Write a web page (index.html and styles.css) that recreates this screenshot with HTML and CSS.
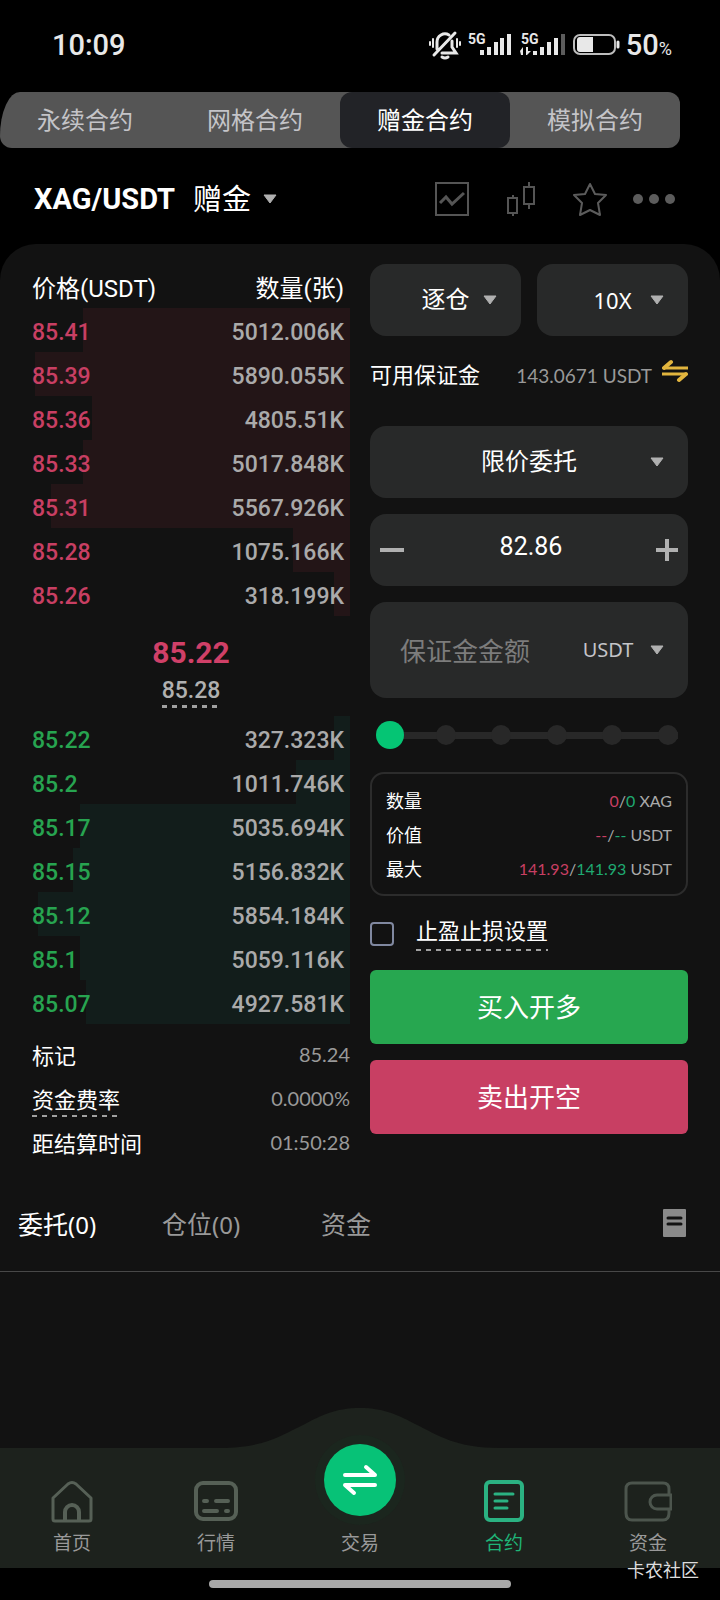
FILE: index.html
```html
<!DOCTYPE html>
<html lang="zh-CN">
<head>
    <meta charset="UTF-8">
    <meta name="viewport" content="width=device-width, initial-scale=1.0">
    <title>XAG/USDT 赠金合约</title>
    <link rel="stylesheet" href="styles.css">
</head>
<body>

    <!-- Status Bar -->
    <header class="status-bar">
        <span class="status-time">10:09</span>
        <div class="status-icons">
            <svg width="34" height="30" viewBox="0 0 34 30" fill="none" stroke="#e8e8e8" stroke-width="3" stroke-linecap="round">
                <path d="M9 19V12a8 8 0 0 1 12-7M24 11v6l4 6H14M27 3L6 25"/>
                <path d="M14 27q3 2 6 0"/>
                <path d="M2 12v3M5 9v8M29 9v8M32 12v3" stroke-width="2"/>
            </svg>
            <svg width="46" height="30" viewBox="0 0 46 30" fill="#e8e8e8">
                <text class="network" x="0" y="14">5G</text>
                <path d="M12 20h4v5h-4zM19 17h4v8h-4zM26 12h4v13h-4zM32 8h4v17h-4zM39 4h4v21h-4z"/>
            </svg>
            <svg width="46" height="30" viewBox="0 0 46 30" fill="#e8e8e8">
                <text class="network" x="1" y="14">5G</text>
                <path d="M0 21l3-4v8H1zM6 17h2v4h3l-4 4H6zM13 21h4v4h-4zM20 17h4v8h-4zM27 12h4v13h-4zM34 8h4v17h-4z"/>
                <path fill="#5c5c5c" d="M41 4h4v21h-4z"/>
            </svg>
            <svg width="48" height="30" viewBox="0 0 48 30">
                <rect x="2" y="5" width="41" height="19" rx="6" fill="none" stroke="#bdbdbd" stroke-width="2"/>
                <path d="M8 7h13v15H8q-3 0-3-3v-9q0-3 3-3z" fill="#e8e8e8"/>
                <path d="M46 12v5" stroke="#e8e8e8" stroke-width="3" stroke-linecap="round"/>
            </svg>
            <span class="battery-level">50<small>%</small></span>
        </div>
    </header>

    <!-- Contract Type Tabs -->
    <nav class="contract-tabs">
        <button type="button">永续合约</button>
        <button type="button">网格合约</button>
        <button type="button" class="active">赠金合约</button>
        <button type="button">模拟合约</button>
    </nav>

    <!-- Trading Pair -->
    <div class="pair-bar">
        <button type="button" class="pair-name">
            <strong>XAG/USDT</strong>
            <span>赠金</span>
            <svg width="14" height="10" viewBox="0 0 14 10"><path d="M1 1h12L7 9z" fill="#b0b0b0" stroke="#b0b0b0" stroke-linejoin="round"/></svg>
        </button>
        <div class="pair-tools">
            <button type="button" aria-label="K线">
                <svg width="34" height="34" viewBox="0 0 34 34" fill="none" stroke="#555" stroke-width="2">
                    <rect x="1" y="1" width="32" height="32"/>
                    <path d="M5 21l6-6 6 7 12-11" stroke-width="3"/>
                </svg>
            </button>
            <button type="button" aria-label="深度">
                <svg width="34" height="34" viewBox="0 0 34 34" fill="none" stroke="#555" stroke-width="2">
                    <path d="M4 16h9v15H4zM9 13v3M9 31v3M20 5h10v17H20zM25 0v5M25 22v5"/>
                </svg>
            </button>
            <button type="button" aria-label="收藏">
                <svg width="34" height="34" viewBox="0 0 34 34" fill="none" stroke="#5c5c5c" stroke-width="2" stroke-linejoin="round">
                    <path d="M17 2l5 10 11 1-8 8 2 12-10-5-10 5 2-12-8-8 11-1z"/>
                </svg>
            </button>
            <button type="button" aria-label="更多">
                <svg width="42" height="34" viewBox="0 0 42 34" fill="#5c5c5c">
                    <circle cx="5" cy="17" r="5"/><circle cx="21" cy="17" r="5"/><circle cx="37" cy="17" r="5"/>
                </svg>
            </button>
        </div>
    </div>

    <main class="panel">
        <div class="trade">

            <!-- Order Book -->
            <section class="book">
                <table>
                    <thead>
                        <tr><th>价格(USDT)</th><th>数量(张)</th></tr>
                    </thead>
                    <tbody class="asks">
                        <tr style="--depth: 84%"><td>85.41</td><td>5012.006K</td></tr>
                        <tr style="--depth: 99%"><td>85.39</td><td>5890.055K</td></tr>
                        <tr style="--depth: 81%"><td>85.36</td><td>4805.51K</td></tr>
                        <tr style="--depth: 84%"><td>85.33</td><td>5017.848K</td></tr>
                        <tr style="--depth: 94%"><td>85.31</td><td>5567.926K</td></tr>
                        <tr style="--depth: 18%"><td>85.28</td><td>1075.166K</td></tr>
                        <tr style="--depth: 5%"><td>85.26</td><td>318.199K</td></tr>
                    </tbody>
                    <tbody>
                        <tr>
                            <td colspan="2" class="last-price">
                                <strong>85.22</strong>
                                <span class="dashed thick">85.28</span>
                            </td>
                        </tr>
                    </tbody>
                    <tbody class="bids">
                        <tr style="--depth: 5%"><td>85.22</td><td>327.323K</td></tr>
                        <tr style="--depth: 17%"><td>85.2</td><td>1011.746K</td></tr>
                        <tr style="--depth: 85%"><td>85.17</td><td>5035.694K</td></tr>
                        <tr style="--depth: 87%"><td>85.15</td><td>5156.832K</td></tr>
                        <tr style="--depth: 98%"><td>85.12</td><td>5854.184K</td></tr>
                        <tr style="--depth: 85%"><td>85.1</td><td>5059.116K</td></tr>
                        <tr style="--depth: 83%"><td>85.07</td><td>4927.581K</td></tr>
                    </tbody>
                </table>
                <dl class="book-info">
                    <div><dt>标记</dt><dd>85.24</dd></div>
                    <div><dt><span class="dashed">资金费率</span></dt><dd>0.0000%</dd></div>
                    <div><dt>距结算时间</dt><dd>01:50:28</dd></div>
                </dl>
            </section>

            <!-- Order Form -->
            <form class="order">
                <div class="order-modes">
                    <select class="field" aria-label="保证金模式"><option>逐仓</option></select>
                    <select class="field latin" aria-label="杠杆"><option>10X</option></select>
                </div>
                <div class="available">
                    <span>可用保证金</span>
                    <span class="available-value">143.0671 USDT</span>
                    <button type="button" aria-label="划转">
                        <svg width="26" height="24" viewBox="0 0 26 24" fill="none" stroke="#e2b53e" stroke-width="3">
                            <path d="M26 9H2M0 15h24"/>
                            <path d="M9 3L2 9M17 21l7-6" stroke-width="4" stroke-linecap="round"/>
                        </svg>
                    </button>
                </div>
                <select class="field" aria-label="委托类型"><option>限价委托</option></select>
                <div class="field price">
                    <button type="button" aria-label="减少"><svg width="24" height="24" viewBox="0 0 24 24"><path d="M0 12h24" stroke="#b0b0b0" stroke-width="4"/></svg></button>
                    <input type="text" value="82.86" aria-label="价格">
                    <button type="button" aria-label="增加"><svg width="24" height="24" viewBox="0 0 24 24"><path d="M2 12h22M13 1v22" stroke="#b0b0b0" stroke-width="4"/></svg></button>
                </div>
                <div class="field amount">
                    <input type="text" placeholder="保证金金额" aria-label="保证金金额">
                    <select class="latin" aria-label="单位"><option>USDT</option></select>
                </div>
                <div class="slider">
                    <div class="slider-marks"><i></i><i></i><i></i><i></i><i></i><i></i></div>
                    <input type="range" min="0" max="100" value="0" aria-label="仓位比例">
                </div>
                <dl class="summary">
                    <div><dt>数量</dt><dd><span class="red">0</span>/<span class="green">0</span> XAG</dd></div>
                    <div><dt>价值</dt><dd><span class="red">--</span>/<span class="green">--</span> USDT</dd></div>
                    <div><dt>最大</dt><dd><span class="red">141.93</span>/<span class="green">141.93</span> USDT</dd></div>
                </dl>
                <div class="stop-setting">
                    <input type="checkbox" id="stop">
                    <label for="stop" class="dashed">止盈止损设置</label>
                </div>
                <button type="button" class="submit buy">买入开多</button>
                <button type="button" class="submit sell">卖出开空</button>
            </form>
        </div>

        <!-- Orders / Positions -->
        <div class="record-tabs">
            <button type="button" class="active">委托<span>(0)</span></button>
            <button type="button">仓位<span>(0)</span></button>
            <button type="button">资金</button>
            <button type="button" aria-label="全部记录">
                <svg width="24" height="28" viewBox="0 0 24 28"><rect width="23" height="28" rx="1" fill="#8a8a8a"/><path d="M5 9h13M5 15h13" stroke="#121212" stroke-width="3" stroke-linecap="round"/></svg>
            </button>
        </div>
    </main>

    <!-- Bottom Navigation -->
    <nav class="bottom-nav">
        <svg class="nav-hump" width="280" height="41" viewBox="0 0 280 41"><path d="M0 40C45 40 62 27 85 16C100 8 115 0 140 0S180 8 195 16C218 27 235 40 280 40v1H0z" fill="#1d221d"/></svg>
        <a href="#">
            <svg width="44" height="44" viewBox="0 0 44 44" fill="none" stroke="#566056" stroke-width="3" stroke-linejoin="round">
                <path d="M3 18L18 4q4-3 8 0L41 18v21q0 2-2 2H5q-2 0-2-2z"/>
                <path d="M15 41V32a7 7 0 0 1 14 0v9" stroke-width="4"/>
            </svg>
            首页
        </a>
        <a href="#">
            <svg width="44" height="44" viewBox="0 0 44 44" fill="none" stroke="#566056" stroke-width="4">
                <rect x="2" y="3" width="40" height="36" rx="7"/>
                <path d="M10 21h3M22 21h12M10 31h13M32 31h2" stroke-linecap="round"/>
            </svg>
            行情
        </a>
        <a href="#">
            <span class="swap">
                <svg width="36" height="36" viewBox="0 0 36 36" fill="none" stroke="#fff" stroke-width="4" stroke-linecap="round" stroke-linejoin="round">
                    <path d="M3 13h30l-9-8M33 23H3l9 8"/>
                </svg>
            </span>
            交易
        </a>
        <a href="#" class="active">
            <svg width="44" height="44" viewBox="0 0 44 44" fill="none" stroke="#2bb282" stroke-width="4">
                <rect x="4" y="2" width="36" height="38" rx="4"/>
                <path d="M13 14h18M13 21h12M13 28h12" stroke-width="3" stroke-linecap="round"/>
            </svg>
            合约
        </a>
        <a href="#">
            <svg width="48" height="44" viewBox="0 0 48 44" fill="none" stroke="#4c554d" stroke-width="3">
                <path d="M45 15V9q0-6-6-6H8Q2 3 2 9v24q0 7 6 7h31q6 0 6-7v-4"/>
                <path d="M47 15H33a7 7 0 0 0 0 14h14z"/>
            </svg>
            资金
        </a>
    </nav>

    <footer class="gesture-area">
        <div class="gesture-bar"></div>
        <span class="watermark">卡农社区</span>
    </footer>
</body>
</html>
```
FILE: styles.css
```css
/* General Styles */
* {
    box-sizing: border-box;
}

body {
    display: flex;
    flex-direction: column;
    min-height: 100vh;
    margin: 0;
    background: #000;
    color: #fff;
    font-family: Roboto, "Noto Sans CJK SC", sans-serif;
}

button, input, select {
    padding: 0;
    border: 0;
    background: none;
    color: inherit;
    font: inherit;
}

button {
    cursor: pointer;
}

svg {
    display: block;
}

dl, dd {
    margin: 0;
}

.red {
    color: #c83f63;
}

.green {
    color: #1fa971;
}

/* Dashed underline for terms with an explanation */
.dashed {
    padding-bottom: 4px;
    background: repeating-linear-gradient(to right, #a0a0a0 0 5px, transparent 5px 10px) bottom / 100% 2px no-repeat;
}

.dashed.thick {
    background-size: 100% 3px;
}

/* Status Bar */
.status-bar {
    display: flex;
    justify-content: space-between;
    align-items: center;
    height: 92px;
    padding: 0 48px 2px 52px;
    color: #e8e8e8;
}

.status-time {
    font-size: 29px;
    font-weight: 500;
}

.status-icons {
    display: flex;
    align-items: center;
    gap: 6px;
}

.network {
    font-size: 14px;
    font-weight: 700;
}

.battery-level {
    font-size: 29px;
    font-weight: 500;
}

.battery-level small {
    font-size: 18px;
    font-weight: 400;
}

/* Contract Type Tabs */
.contract-tabs {
    display: grid;
    grid-template-columns: repeat(4, 1fr);
    height: 56px;
    margin-right: 40px;
    border-radius: 20px 12px 12px 12px / 44px 12px 12px 12px;
    background: #555;
    overflow: hidden;
}

.contract-tabs button {
    padding-bottom: 4px;
    color: #c4c4c8;
    font-size: 24px;
}

.contract-tabs .active {
    border-radius: 12px;
    background: #222327;
    color: #fff;
}

/* Trading Pair */
.pair-bar {
    display: flex;
    justify-content: space-between;
    align-items: center;
    height: 96px;
    padding: 6px 45px 0 34px;
}

.pair-name {
    display: flex;
    align-items: center;
    font-size: 29px;
}

.pair-name span {
    margin: 0 12px 0 18px;
    padding-bottom: 4px;
}

.pair-tools {
    display: flex;
    gap: 35px;
}

.pair-tools button:last-child {
    margin-left: -9px;
}

/* Main Panel */
.panel {
    flex: 1;
    border-radius: 36px 36px 0 0;
    background: #121212;
}

.trade {
    display: grid;
    grid-template-columns: 1fr 1fr;
    gap: 20px;
    padding: 20px 32px 14px;
}

/* Order Book */
.book table {
    width: 100%;
    border-collapse: collapse;
    font-size: 23px;
    font-weight: 500;
}

.book tr {
    height: 44px;
}

.book th,
.book td {
    padding: 5px 0 0;
    line-height: 32px;
}

.book th {
    font-size: 24px;
    font-weight: 400;
    text-align: left;
}

.book th:last-child,
.asks td:last-child,
.bids td:last-child {
    padding-right: 6px;
    color: #aaa;
    text-align: right;
}

.book th:last-child {
    color: #fff;
}

.asks tr {
    background: linear-gradient(to left, #231517 var(--depth), transparent 0);
    color: #c83f63;
}

.bids tr {
    background: linear-gradient(to left, #121d1b var(--depth), transparent 0);
    color: #27a450;
}

.book .last-price {
    height: 100px;
    text-align: center;
}

.last-price strong {
    display: block;
    color: #d04068;
    font-size: 30px;
    line-height: 44px;
}

.last-price span {
    color: #b0b0b0;
}

.book-info {
    padding-top: 8px;
    font-size: 22px;
}

.book-info div {
    display: flex;
    justify-content: space-between;
    align-items: center;
    height: 44px;
}

.book-info dd {
    color: #999;
    font-family: Lato, sans-serif;
    font-size: 20px;
}

/* Order Form */
.order {
    display: flex;
    flex-direction: column;
    gap: 16px;
    min-width: 0;
}

.order-modes {
    display: grid;
    grid-template-columns: 1fr 1fr;
    gap: 16px;
}

.field {
    width: 100%;
    height: 72px;
    border-radius: 16px;
    background-color: #282929;
    font-size: 24px;
}

select {
    appearance: none;
    background: url("data:image/svg+xml,%3Csvg xmlns='http://www.w3.org/2000/svg' width='14' height='10'%3E%3Cpath d='M1 1h12L7 9z' fill='%23b0b0b0' stroke='%23b0b0b0' stroke-linejoin='round'/%3E%3C/svg%3E") right 24px center no-repeat;
    text-align: center;
    text-align-last: center;
}

.field.latin {
    font-family: "Noto Sans", sans-serif;
    font-size: 22px;
}

.available {
    display: flex;
    align-items: center;
    height: 58px;
    padding-bottom: 12px;
    font-size: 22px;
}

.available span:first-child {
    padding-bottom: 4px;
}

.available-value {
    margin: 0 10px 0 auto;
    color: #999;
    font-family: Lato, sans-serif;
    font-size: 19px;
}

.available button {
    padding-bottom: 8px;
}

.price {
    display: flex;
    align-items: center;
    padding: 0 10px;
}

.price input {
    flex: 1;
    min-width: 0;
    padding: 0 0 8px 4px;
    font-size: 25px;
    text-align: center;
}

.amount {
    display: flex;
    align-items: center;
    height: 96px;
    padding-left: 30px;
    font-size: 26px;
}

.amount input {
    flex: 1;
    min-width: 0;
    padding-top: 4px;
}

.amount input::placeholder {
    color: #7c7c7c;
}

.amount select {
    width: 112px;
    padding-right: 48px;
    color: #c4c4c8;
    font-family: "Noto Sans", sans-serif;
    font-size: 20px;
    line-height: 32px;
}

/* Position Slider */
.slider {
    display: grid;
    align-items: center;
    height: 42px;
    padding: 0 6px;
}

.slider > * {
    grid-area: 1 / 1;
}

.slider-marks {
    display: flex;
    justify-content: space-between;
    margin: 0 4px;
    background: linear-gradient(#282828, #282828) center / 100% 7px no-repeat;
}

.slider-marks i {
    width: 20px;
    height: 20px;
    border-radius: 50%;
    background: #282828;
}

.slider input {
    appearance: none;
    width: 100%;
    height: 28px;
    margin: 0;
}

.slider input::-webkit-slider-thumb {
    appearance: none;
    width: 28px;
    height: 28px;
    border-radius: 50%;
    background: #05c574;
}

/* Order Summary */
.summary {
    padding: 9px 14px;
    border: 2px solid #2c2c2c;
    border-radius: 14px;
    font-size: 18px;
}

.summary div {
    display: flex;
    justify-content: space-between;
    align-items: center;
    height: 34px;
}

.summary dd {
    color: #aaa;
    font-family: Lato, sans-serif;
    font-size: 16px;
}

.stop-setting {
    display: flex;
    align-items: center;
    gap: 22px;
    height: 42px;
    padding-top: 2px;
    font-size: 22px;
    line-height: 30px;
}

.stop-setting input {
    appearance: none;
    width: 24px;
    height: 24px;
    margin: 0;
    border: 2px solid #8088a0;
    border-radius: 4px;
}

.stop-setting input:checked {
    background: #05c574;
}

.submit {
    height: 74px;
    padding-bottom: 4px;
    border-radius: 6px;
    font-size: 26px;
}

.buy {
    background: #27a750;
}

.sell {
    background: #c83f63;
}

/* Orders / Positions */
.record-tabs {
    display: grid;
    grid-template-columns: 144px 159px 1fr auto;
    height: 94px;
    padding: 0 33px 4px 18px;
    border-bottom: 1px solid #484848;
}

.record-tabs button {
    color: #999;
    font-size: 25px;
    text-align: left;
}

.record-tabs span {
    font-family: "Noto Sans", sans-serif;
    font-size: 24px;
}

.record-tabs .active {
    color: #fff;
}

/* Bottom Navigation */
.bottom-nav {
    position: relative;
    display: grid;
    grid-template-columns: repeat(5, 1fr);
    padding: 32px 0 12px;
    background: #1d221d;
}

.nav-hump {
    position: absolute;
    top: -40px;
    left: 50%;
    transform: translateX(-50%);
}

.bottom-nav a {
    position: relative;
    display: flex;
    flex-direction: column;
    align-items: center;
    gap: 8px;
    color: #999;
    font-size: 19px;
    line-height: 24px;
    text-decoration: none;
}

.bottom-nav .active {
    color: #1fb477;
}

.swap {
    display: grid;
    place-items: center;
    width: 72px;
    height: 72px;
    margin: -36px 0 8px;
    border-radius: 50%;
    background: #07c277;
    box-shadow: 0 0 0 9px #1b261e;
}

.gesture-area {
    position: relative;
    height: 32px;
    padding-top: 12px;
}

.gesture-bar {
    width: 42%;
    height: 8px;
    margin: 0 auto;
    border-radius: 4px;
    background: #a8a8a8;
}

.watermark {
    position: absolute;
    top: -9px;
    right: 21px;
    color: #ddd;
    font-size: 18px;
    line-height: 24px;
}
```
